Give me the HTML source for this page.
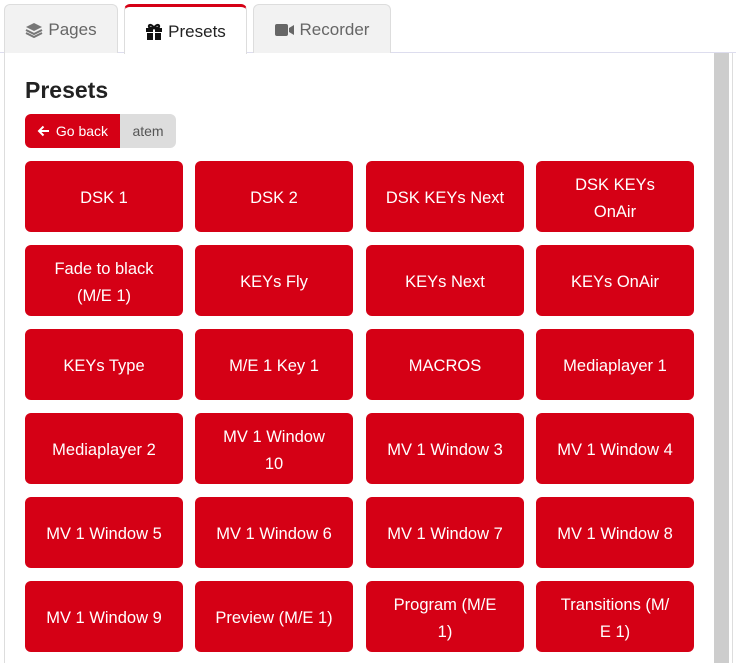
<!DOCTYPE html>
<html><head><style>
*{box-sizing:border-box;margin:0;padding:0}
body{width:736px;height:663px;overflow:hidden;background:#fff;font-family:"Liberation Sans",sans-serif;position:relative}
.tabs{position:absolute;left:0;top:0;width:736px;height:53px;border-bottom:1px solid #dde;}
.tab{position:absolute;top:4px;height:49px;border:1px solid #ddd;border-bottom:none;border-radius:6px 6px 0 0;background:#f2f2f2;color:#666;font-size:17px;display:flex;align-items:center;justify-content:center;gap:5px;padding-top:2px}
.tab.act{background:#fff;color:#222;border-top:3px solid #d50015;height:50px;z-index:2}
.panel{position:absolute;left:4px;top:53px;width:729px;height:610px;border-left:1px solid #ddd;border-right:1px solid #ddd}
.sb{position:absolute;left:714px;top:53px;width:15px;height:610px;background:#cdcdcd}
h1{position:absolute;left:25px;top:77px;font-size:23px;font-weight:bold;color:#222}
.gb{position:absolute;left:25px;top:114px;height:34px;width:95px;background:#d50015;color:#fff;border-radius:6px 0 0 6px;font-size:14px;display:flex;align-items:center;justify-content:center;gap:6px;white-space:nowrap}
.at{position:absolute;left:120px;top:114px;height:34px;width:56px;background:#ddd;color:#555;border-radius:0 6px 6px 0;font-size:14px;display:flex;align-items:center;justify-content:center}
.b{position:absolute;width:158px;height:71px;background:#d50015;color:#fff;border-radius:6px;font-size:16.5px;line-height:27px;display:flex;align-items:center;justify-content:center;text-align:center;white-space:nowrap;padding-top:4px}
</style></head><body>
<div class="tabs"></div>
<div class="tab" style="left:4px;width:114px"><svg width="18" height="16" viewBox="0 0 18 16"><path d="M9 1 17 5 9 9 1 5Z" fill="#777"/><path d="M1 8l8 4 8-4M1 11l8 4 8-4" stroke="#777" stroke-width="2" fill="none"/></svg>Pages</div>
<div class="tab act" style="left:124px;width:123px"><svg width="18" height="17" viewBox="0 0 18 17"><rect x="1" y="5" width="16" height="4" fill="#111"/><rect x="2" y="10" width="14" height="7" fill="#111"/><rect x="8" y="5" width="2" height="12" fill="#fff"/><path d="M9 5C7 1 3 1 4 4 5 5 9 5 9 5 9 5 13 5 14 4 15 1 11 1 9 5Z" fill="none" stroke="#111" stroke-width="2"/></svg>Presets</div>
<div class="tab" style="left:253px;width:138px"><svg width="20" height="14" viewBox="0 0 20 14"><rect x="0" y="1" width="13" height="12" rx="2" fill="#666"/><path d="M14 5 19 2V12L14 9Z" fill="#666"/></svg>Recorder</div>
<div class="panel"></div>
<div class="sb"></div>
<h1>Presets</h1>
<div class="gb"><svg width="13" height="12" viewBox="0 0 13 12"><path d="M12 6H2M6.5 1.5 2 6l4.5 4.5" stroke="#fff" stroke-width="2" fill="none"/></svg>Go back</div>
<div class="at">atem</div>
<div class="b" style="left:25px;top:161px">DSK 1</div>
<div class="b" style="left:195px;top:161px">DSK 2</div>
<div class="b" style="left:366px;top:161px">DSK KEYs Next</div>
<div class="b" style="left:536px;top:161px">DSK KEYs<br>OnAir</div>
<div class="b" style="left:25px;top:245px">Fade to black<br>(M/E 1)</div>
<div class="b" style="left:195px;top:245px">KEYs Fly</div>
<div class="b" style="left:366px;top:245px">KEYs Next</div>
<div class="b" style="left:536px;top:245px">KEYs OnAir</div>
<div class="b" style="left:25px;top:329px">KEYs Type</div>
<div class="b" style="left:195px;top:329px">M/E 1 Key 1</div>
<div class="b" style="left:366px;top:329px">MACROS</div>
<div class="b" style="left:536px;top:329px">Mediaplayer 1</div>
<div class="b" style="left:25px;top:413px">Mediaplayer 2</div>
<div class="b" style="left:195px;top:413px">MV 1 Window<br>10</div>
<div class="b" style="left:366px;top:413px">MV 1 Window 3</div>
<div class="b" style="left:536px;top:413px">MV 1 Window 4</div>
<div class="b" style="left:25px;top:497px">MV 1 Window 5</div>
<div class="b" style="left:195px;top:497px">MV 1 Window 6</div>
<div class="b" style="left:366px;top:497px">MV 1 Window 7</div>
<div class="b" style="left:536px;top:497px">MV 1 Window 8</div>
<div class="b" style="left:25px;top:581px">MV 1 Window 9</div>
<div class="b" style="left:195px;top:581px">Preview (M/E 1)</div>
<div class="b" style="left:366px;top:581px">Program (M/E<br>1)</div>
<div class="b" style="left:536px;top:581px">Transitions (M/<br>E 1)</div>
</body></html>
